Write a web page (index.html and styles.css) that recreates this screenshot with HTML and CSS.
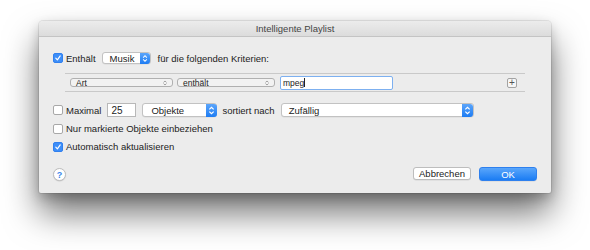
FILE: index.html
```html
<!DOCTYPE html>
<html lang="de">
<head>
  <meta charset="UTF-8">
  <title>Intelligente Playlist</title>
  <link rel="stylesheet" href="styles.css">
</head>
<body>
  <div class="dialog">
    <div class="titlebar">Intelligente Playlist</div>

    <div class="content">
      <div class="row row-match">
        <span class="check checked"><svg viewBox="0 0 9 9"><path d="M2 4.6 L3.8 6.6 L7 2.2"/></svg></span>
        <span class="label">Enthält</span>
        <span class="popup popup-blue popup-kind">Musik<span class="stepper"><svg viewBox="0 0 10 12"><path d="M3 5 L5 3 L7 5 M3 7 L5 9 L7 7"/></svg></span></span>
        <span class="label">für die folgenden Kriterien:</span>
      </div>

      <div class="rules">
        <span class="popup popup-small popup-field">Art<span class="mini-stepper"><svg viewBox="0 0 8 8"><path d="M2.5 3.4 L4 2 L5.5 3.4 M2.5 4.6 L4 6 L5.5 4.6"/></svg></span></span>
        <span class="popup popup-small popup-op">enthält<span class="mini-stepper"><svg viewBox="0 0 8 8"><path d="M2.5 3.4 L4 2 L5.5 3.4 M2.5 4.6 L4 6 L5.5 4.6"/></svg></span></span>
        <span class="field field-focus">mpeg<span class="caret"></span></span>
        <span class="add-btn">+</span>
      </div>

      <div class="row row-limit">
        <span class="check"></span>
        <span class="label">Maximal</span>
        <span class="field field-count">25</span>
        <span class="popup popup-blue popup-unit">Objekte<span class="stepper"><svg viewBox="0 0 10 12"><path d="M3 5 L5 3 L7 5 M3 7 L5 9 L7 7"/></svg></span></span>
        <span class="label">sortiert nach</span>
        <span class="popup popup-blue popup-sort">Zufällig<span class="stepper"><svg viewBox="0 0 10 12"><path d="M3 5 L5 3 L7 5 M3 7 L5 9 L7 7"/></svg></span></span>
      </div>

      <div class="row row-option">
        <span class="check"></span>
        <span class="label">Nur markierte Objekte einbeziehen</span>
      </div>

      <div class="row row-option row-live">
        <span class="check checked"><svg viewBox="0 0 9 9"><path d="M2 4.6 L3.8 6.6 L7 2.2"/></svg></span>
        <span class="label">Automatisch aktualisieren</span>
      </div>
    </div>

    <div class="footer">
      <span class="help">?</span>
      <div class="buttons">
        <span class="btn">Abbrechen</span>
        <span class="btn btn-default">OK</span>
      </div>
    </div>
  </div>
</body>
</html>
```

FILE: styles.css
```css
html {
  background: #fff;
}
body {
  margin: 0;
  padding: 21px 0 60px 39px;
  font-family: 'Liberation Sans', Arial, sans-serif;
  font-size: 9.5px;
  color: #222;
}
.dialog {
  width: 512px;
  height: 172px;
  background: #ececec;
  border-radius: 4px 4px 2px 2px;
  box-shadow: 0 20px 34px rgba(0, 0, 0, 0.55), 0 5px 12px rgba(0, 0, 0, 0.2), 0 0 0 1px rgba(0, 0, 0, 0.08);
  display: flex;
  flex-direction: column;
}
.titlebar {
  height: 15px;
  line-height: 15px;
  text-align: center;
  font-size: 9.5px;
  color: #444;
  background: linear-gradient(#ececec, #dcdcdc);
  border-bottom: 1px solid #c4c4c4;
  border-radius: 4px 4px 0 0;
}
.content {
  padding: 15px 26px 0 14px;
}
.row {
  display: flex;
  align-items: center;
}
.row-match {
  height: 12px;
}
.label {
  white-space: nowrap;
}
.check {
  width: 8px;
  height: 8px;
  border: 0.5px solid #a8a8a8;
  border-radius: 2px;
  background: #fff;
  margin-right: 3px;
  flex: none;
  display: flex;
}
.check.checked {
  background: #3d8ef8;
  border-color: #3180ee;
}
.check svg {
  width: 100%;
  height: 100%;
}
.check svg path {
  fill: none;
  stroke: #fff;
  stroke-width: 1.3;
  stroke-linecap: round;
  stroke-linejoin: round;
}
.popup {
  display: flex;
  align-items: center;
  position: relative;
  box-sizing: border-box;
  white-space: nowrap;
}
.popup-blue {
  height: 12px;
  background: #fff;
  border: 0.5px solid #c2c2c2;
  border-radius: 3px;
  padding-left: 7px;
  box-shadow: 0 0.5px 0 rgba(0, 0, 0, 0.08);
}
.stepper {
  position: absolute;
  right: -0.5px;
  top: -0.5px;
  bottom: -0.5px;
  width: 10px;
  background: linear-gradient(#5ba5fb, #1d7cf3);
  border-radius: 0 3px 3px 0;
  display: flex;
}
.stepper svg {
  width: 100%;
  height: 100%;
}
.stepper svg path {
  fill: none;
  stroke: #fff;
  stroke-width: 1.1;
}
.popup-kind {
  width: 49px;
  margin-left: 6px;
  margin-right: 7px;
}
.rules {
  margin: 9px 0 0 12px;
  height: 17px;
  border-top: 1px solid #c9c9c9;
  border-bottom: 1px solid #c9c9c9;
  display: flex;
  align-items: center;
  padding-left: 5px;
}
.popup-small {
  height: 9px;
  border: 0.5px solid #b0b0b0;
  border-radius: 3px;
  padding-left: 5px;
  font-size: 8.5px;
  background: #f2f2f2;
}
.mini-stepper {
  position: absolute;
  right: 3px;
  top: 0;
  width: 8px;
  height: 8px;
  display: flex;
}
.mini-stepper svg path {
  fill: none;
  stroke: #8d8d8d;
  stroke-width: 0.8;
}
.popup-field {
  width: 103px;
  margin-right: 4px;
}
.popup-op {
  width: 98px;
  margin-right: 5px;
}
.field {
  box-sizing: border-box;
  height: 14px;
  background: #fff;
  border: 0.5px solid #b8b8b8;
  display: flex;
  align-items: center;
  padding-left: 3px;
}
.field-focus {
  width: 113px;
  font-size: 8.5px;
  border: 1.5px solid #7db0f0;
  border-radius: 2px;
  padding-left: 2px;
}
.caret {
  width: 1px;
  height: 9px;
  background: #222;
}
.add-btn {
  margin-left: auto;
  margin-right: 8px;
  width: 10px;
  height: 10px;
  box-sizing: border-box;
  border: 1px solid #a3a3a3;
  border-radius: 2px;
  background: #f6f6f6;
  color: #555;
  font-size: 10px;
  line-height: 7px;
  text-align: center;
}
.row-limit {
  margin-top: 11px;
  height: 14px;
}
.row-limit .label {
  margin-right: 6px;
}
.row-limit .label:last-of-type {
  margin-right: 3px;
}
.field-count {
  width: 29px;
  margin-right: 6px;
  font-size: 10px;
}
.popup-unit {
  width: 75px;
  height: 14px;
  margin-right: 5px;
  padding-left: 8px;
}
.popup-unit .stepper,
.popup-sort .stepper {
  width: 11px;
}
.popup-sort {
  width: 193px;
  height: 14px;
  padding-left: 7px;
}
.row-option {
  margin-top: 6px;
  height: 11px;
}
.row-live {
  margin-top: 7px;
}
.footer {
  margin-top: auto;
  padding: 0 14px 12px 14px;
  display: flex;
  justify-content: space-between;
  align-items: center;
}
.help {
  width: 13px;
  height: 13px;
  box-sizing: border-box;
  border-radius: 50%;
  background: #fff;
  border: 0.5px solid #bdbdbd;
  box-shadow: 0 0.5px 1px rgba(0, 0, 0, 0.15);
  color: #3a86ea;
  font-weight: bold;
  font-size: 9px;
  line-height: 12px;
  text-align: center;
}
.buttons {
  display: flex;
  gap: 8px;
}
.btn {
  width: 58px;
  height: 13px;
  box-sizing: border-box;
  background: #fff;
  border: 0.5px solid #bdbdbd;
  border-radius: 3px;
  box-shadow: 0 0.5px 0 rgba(0, 0, 0, 0.1);
  line-height: 12px;
  text-align: center;
}
.btn-default {
  background: linear-gradient(#5aa6fb, #1b7cf3);
  border-color: #2e80ee;
  color: #fff;
  height: 14px;
  line-height: 13px;
}
```
